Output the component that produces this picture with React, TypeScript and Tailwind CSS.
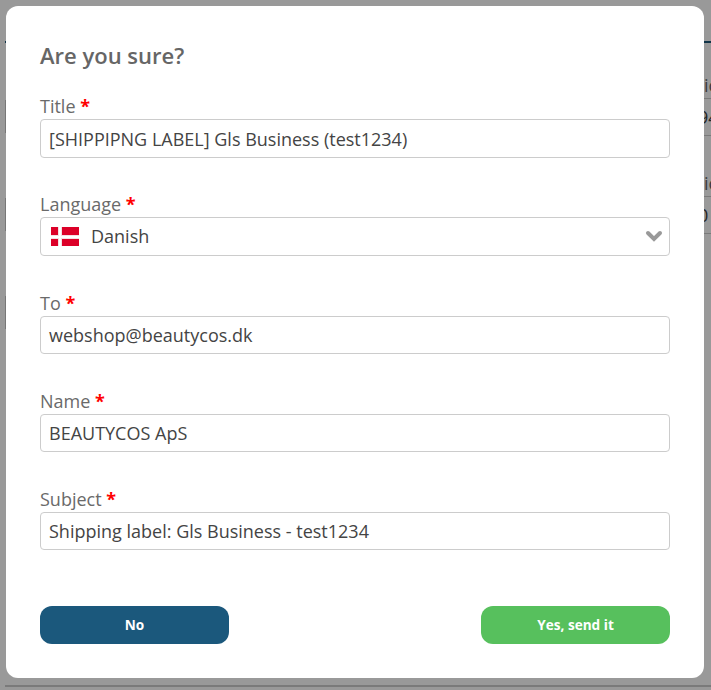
import React from "react";

type FieldProps = {
  label: string;
  boxClass: string;
  children: React.ReactNode;
};

function Field({ label, boxClass, children }: FieldProps) {
  return (
    <div>
      <label className="block h-[25px] text-[18px] leading-[25px] whitespace-nowrap text-[#6a6a6a]">
        {label} <span className="font-bold text-[#ff0000]">*</span>
      </label>
      <div className={`flex items-center rounded-[4px] border border-[#ccc] bg-white px-2 text-[18px] leading-[25px] text-[#444] ${boxClass}`}>
        {children}
      </div>
    </div>
  );
}

function DanishFlag() {
  return (
    <svg className="ml-0.5 h-[19px] w-7 shrink-0" viewBox="0 0 28 19" shapeRendering="crispEdges">
      <rect width="28" height="19" fill="#dc0028" />
      <rect x="7" width="4" height="19" fill="#f3dfe3" />
      <rect y="8" width="28" height="4" fill="#f3dfe3" />
      <rect x="8" width="2" height="19" fill="#fff" />
      <rect y="9" width="28" height="2" fill="#fff" />
    </svg>
  );
}

function Backdrop() {
  return (
    <div className="flex h-[690px] w-[711px] flex-col overflow-hidden pl-[5px]">
      <div className="mt-[41px] h-[2px] shrink-0 bg-[#103448]" />
      <div className="flex h-[642px] justify-between">
        <div className="flex flex-col gap-[65px] pt-[57px]">
          <div className="h-[33px] w-px bg-[#777]" />
          <div className="h-[33px] w-px bg-[#777]" />
          <div className="h-[33px] w-px bg-[#777]" />
        </div>
        <div className="w-[11px] overflow-hidden pt-[30px] text-[18px] leading-[25px] whitespace-nowrap">
          <div className="h-[25px] pl-[4px] text-[#3d3d3d]">ic</div>
          <div className="flex h-[38px] items-center border-y border-[#7a7a7a] text-[#262626]">
            <span className="-ml-[2px]">94</span>
          </div>
          <div className="mt-[35px] h-[25px] pl-[4px] text-[#3d3d3d]">ic</div>
          <div className="flex h-[38px] items-center border-y border-[#7a7a7a] text-[#262626]">
            <span className="-ml-[2px]">0</span>
          </div>
        </div>
      </div>
      <div className="h-[2px] shrink-0 bg-[#7a7a7a]" />
    </div>
  );
}

export default function App() {
  return (
    <div className="relative h-[690px] w-[711px] overflow-hidden bg-[#999] font-['Open_Sans',sans-serif]">
      <Backdrop />
      <div className="absolute top-[6px] left-[6px] h-[672px] w-[698px] rounded-[12px] bg-white px-[34px] pt-[33px]">
        <h2 className="h-8 text-[22px] leading-8 font-semibold text-[#666]">Are you sure?</h2>
        <div className="mt-[23px] h-[487px]">
          <Field label="Title" boxClass="h-[39px] pt-px">
            [SHIPPIPNG LABEL] Gls Business (test1234)
          </Field>
          <div className="h-[34px]" />
          <Field label="Language" boxClass="h-[39px]">
            <DanishFlag />
            <span className="ml-3 flex-1">Danish</span>
            <svg className="-mr-[2px] mb-px h-3 w-[18px]" viewBox="0 0 18 12" fill="none" stroke="#999" strokeWidth="4" strokeLinecap="round">
              <path d="M3 3 9 9 15 3" />
            </svg>
          </Field>
          <div className="h-[35px]" />
          <Field label="To" boxClass="h-[38px]">
            webshop@beautycos.dk
          </Field>
          <div className="h-[35px]" />
          <Field label="Name" boxClass="h-[38px]">
            BEAUTYCOS ApS
          </Field>
          <div className="h-[35px]" />
          <Field label="Subject" boxClass="h-[38px]">
            Shipping label: Gls Business - test1234
          </Field>
        </div>
        <div className="mt-[25px] flex justify-between text-[13.6px] font-bold text-white">
          <button className="h-[38px] w-[189px] rounded-[12px] bg-[#1b587c]">No</button>
          <button className="h-[38px] w-[189px] rounded-[12px] bg-[#57c05d]">Yes, send it</button>
        </div>
      </div>
    </div>
  );
}
